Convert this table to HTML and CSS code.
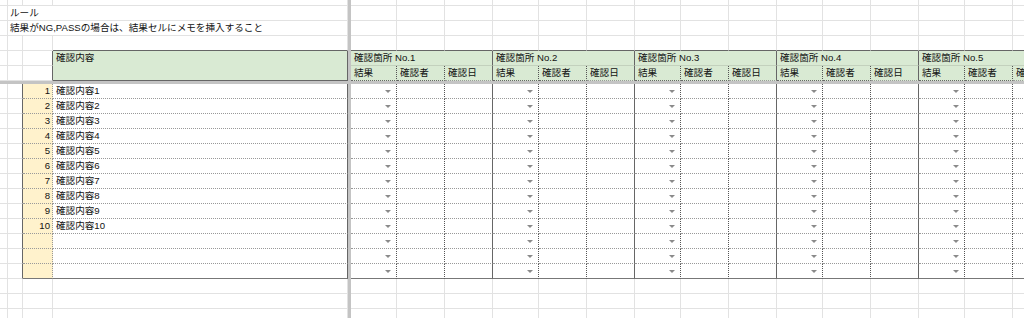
FILE: index.html
```html
<!DOCTYPE html>
<html lang="ja">
<head>
<meta charset="utf-8">
<title>確認シート</title>
<link rel="stylesheet" href="styles.css">
</head>
<body>
<div class="sheet">
<!-- r0 -->
<div class="c"></div><div class="c"></div><div class="c"></div><div class="c"></div><div class="bar"></div>
<div class="c"></div><div class="c"></div><div class="c"></div><div class="c"></div><div class="c"></div><div class="c"></div><div class="c"></div><div class="c"></div><div class="c"></div><div class="c"></div><div class="c"></div><div class="c"></div><div class="c"></div><div class="c"></div><div class="c"></div>
<!-- r1 -->
<div class="c"></div><div class="c t">ルール</div><div class="bar"></div>
<div class="c"></div><div class="c"></div><div class="c"></div><div class="c"></div><div class="c"></div><div class="c"></div><div class="c"></div><div class="c"></div><div class="c"></div><div class="c"></div><div class="c"></div><div class="c"></div><div class="c"></div><div class="c"></div><div class="c"></div>
<!-- r2 -->
<div class="c"></div><div class="c t">結果がNG,PASSの場合は、結果セルにメモを挿入すること</div><div class="bar"></div>
<div class="c"></div><div class="c"></div><div class="c"></div><div class="c"></div><div class="c"></div><div class="c"></div><div class="c"></div><div class="c"></div><div class="c"></div><div class="c"></div><div class="c"></div><div class="c"></div><div class="c"></div><div class="c"></div><div class="c"></div>
<!-- r3 -->
<div class="c"></div><div class="c"></div><div class="c"></div><div class="c bt"></div><div class="bar"></div>
<div class="c bt"></div><div class="c bt"></div><div class="c bt"></div><div class="c bt"></div><div class="c bt"></div><div class="c bt"></div><div class="c bt"></div><div class="c bt"></div><div class="c bt"></div><div class="c bt"></div><div class="c bt"></div><div class="c bt"></div><div class="c bt"></div><div class="c bt"></div><div class="c bt"></div>
<!-- r4 -->
<div class="c"></div><div class="c"></div><div class="c br"></div><div class="c hc">確認内容</div><div class="bar"></div>
<div class="c gh">確認箇所 No.1</div><div class="c gh">確認箇所 No.2</div><div class="c gh">確認箇所 No.3</div><div class="c gh">確認箇所 No.4</div><div class="c gh">確認箇所 No.5</div>
<!-- r5 -->
<div class="c"></div><div class="c"></div><div class="c br"></div><div class="bar"></div>
<div class="c sh">結果</div><div class="c sh">確認者</div><div class="c sh e">確認日</div>
<div class="c sh">結果</div><div class="c sh">確認者</div><div class="c sh e">確認日</div>
<div class="c sh">結果</div><div class="c sh">確認者</div><div class="c sh e">確認日</div>
<div class="c sh">結果</div><div class="c sh">確認者</div><div class="c sh e">確認日</div>
<div class="c sh">結果</div><div class="c sh">確認者</div><div class="c sh e">確認日</div>
<!-- frozen row bar -->
<div class="bar"></div><div class="bar"></div><div class="bar"></div><div class="bar"></div><div class="bar"></div>
<div class="bar"></div><div class="bar"></div><div class="bar"></div><div class="bar"></div><div class="bar"></div><div class="bar"></div><div class="bar"></div><div class="bar"></div><div class="bar"></div><div class="bar"></div><div class="bar"></div><div class="bar"></div><div class="bar"></div><div class="bar"></div><div class="bar"></div>
<!-- d1 -->
<div class="c"></div><div class="c br"></div><div class="c n">1</div><div class="c d">確認内容1</div><div class="bar"></div>
<div class="c r"></div><div class="c p"></div><div class="c e"></div><div class="c r"></div><div class="c p"></div><div class="c e"></div><div class="c r"></div><div class="c p"></div><div class="c e"></div><div class="c r"></div><div class="c p"></div><div class="c e"></div><div class="c r"></div><div class="c p"></div><div class="c e"></div>
<!-- d2 -->
<div class="c"></div><div class="c br"></div><div class="c n">2</div><div class="c d">確認内容2</div><div class="bar"></div>
<div class="c r"></div><div class="c p"></div><div class="c e"></div><div class="c r"></div><div class="c p"></div><div class="c e"></div><div class="c r"></div><div class="c p"></div><div class="c e"></div><div class="c r"></div><div class="c p"></div><div class="c e"></div><div class="c r"></div><div class="c p"></div><div class="c e"></div>
<!-- d3 -->
<div class="c"></div><div class="c br"></div><div class="c n">3</div><div class="c d">確認内容3</div><div class="bar"></div>
<div class="c r"></div><div class="c p"></div><div class="c e"></div><div class="c r"></div><div class="c p"></div><div class="c e"></div><div class="c r"></div><div class="c p"></div><div class="c e"></div><div class="c r"></div><div class="c p"></div><div class="c e"></div><div class="c r"></div><div class="c p"></div><div class="c e"></div>
<!-- d4 -->
<div class="c"></div><div class="c br"></div><div class="c n">4</div><div class="c d">確認内容4</div><div class="bar"></div>
<div class="c r"></div><div class="c p"></div><div class="c e"></div><div class="c r"></div><div class="c p"></div><div class="c e"></div><div class="c r"></div><div class="c p"></div><div class="c e"></div><div class="c r"></div><div class="c p"></div><div class="c e"></div><div class="c r"></div><div class="c p"></div><div class="c e"></div>
<!-- d5 -->
<div class="c"></div><div class="c br"></div><div class="c n">5</div><div class="c d">確認内容5</div><div class="bar"></div>
<div class="c r"></div><div class="c p"></div><div class="c e"></div><div class="c r"></div><div class="c p"></div><div class="c e"></div><div class="c r"></div><div class="c p"></div><div class="c e"></div><div class="c r"></div><div class="c p"></div><div class="c e"></div><div class="c r"></div><div class="c p"></div><div class="c e"></div>
<!-- d6 -->
<div class="c"></div><div class="c br"></div><div class="c n">6</div><div class="c d">確認内容6</div><div class="bar"></div>
<div class="c r"></div><div class="c p"></div><div class="c e"></div><div class="c r"></div><div class="c p"></div><div class="c e"></div><div class="c r"></div><div class="c p"></div><div class="c e"></div><div class="c r"></div><div class="c p"></div><div class="c e"></div><div class="c r"></div><div class="c p"></div><div class="c e"></div>
<!-- d7 -->
<div class="c"></div><div class="c br"></div><div class="c n">7</div><div class="c d">確認内容7</div><div class="bar"></div>
<div class="c r"></div><div class="c p"></div><div class="c e"></div><div class="c r"></div><div class="c p"></div><div class="c e"></div><div class="c r"></div><div class="c p"></div><div class="c e"></div><div class="c r"></div><div class="c p"></div><div class="c e"></div><div class="c r"></div><div class="c p"></div><div class="c e"></div>
<!-- d8 -->
<div class="c"></div><div class="c br"></div><div class="c n">8</div><div class="c d">確認内容8</div><div class="bar"></div>
<div class="c r"></div><div class="c p"></div><div class="c e"></div><div class="c r"></div><div class="c p"></div><div class="c e"></div><div class="c r"></div><div class="c p"></div><div class="c e"></div><div class="c r"></div><div class="c p"></div><div class="c e"></div><div class="c r"></div><div class="c p"></div><div class="c e"></div>
<!-- d9 -->
<div class="c"></div><div class="c br"></div><div class="c n">9</div><div class="c d">確認内容9</div><div class="bar"></div>
<div class="c r"></div><div class="c p"></div><div class="c e"></div><div class="c r"></div><div class="c p"></div><div class="c e"></div><div class="c r"></div><div class="c p"></div><div class="c e"></div><div class="c r"></div><div class="c p"></div><div class="c e"></div><div class="c r"></div><div class="c p"></div><div class="c e"></div>
<!-- d10 -->
<div class="c"></div><div class="c br"></div><div class="c n">10</div><div class="c d">確認内容10</div><div class="bar"></div>
<div class="c r"></div><div class="c p"></div><div class="c e"></div><div class="c r"></div><div class="c p"></div><div class="c e"></div><div class="c r"></div><div class="c p"></div><div class="c e"></div><div class="c r"></div><div class="c p"></div><div class="c e"></div><div class="c r"></div><div class="c p"></div><div class="c e"></div>
<!-- d11 -->
<div class="c"></div><div class="c br"></div><div class="c n"></div><div class="c d"></div><div class="bar"></div>
<div class="c r"></div><div class="c p"></div><div class="c e"></div><div class="c r"></div><div class="c p"></div><div class="c e"></div><div class="c r"></div><div class="c p"></div><div class="c e"></div><div class="c r"></div><div class="c p"></div><div class="c e"></div><div class="c r"></div><div class="c p"></div><div class="c e"></div>
<!-- d12 -->
<div class="c"></div><div class="c br"></div><div class="c n"></div><div class="c d"></div><div class="bar"></div>
<div class="c r"></div><div class="c p"></div><div class="c e"></div><div class="c r"></div><div class="c p"></div><div class="c e"></div><div class="c r"></div><div class="c p"></div><div class="c e"></div><div class="c r"></div><div class="c p"></div><div class="c e"></div><div class="c r"></div><div class="c p"></div><div class="c e"></div>
<!-- d13 -->
<div class="c"></div><div class="c br"></div><div class="c n l"></div><div class="c d l"></div><div class="bar"></div>
<div class="c r l"></div><div class="c p l"></div><div class="c e l"></div><div class="c r l"></div><div class="c p l"></div><div class="c e l"></div><div class="c r l"></div><div class="c p l"></div><div class="c e l"></div><div class="c r l"></div><div class="c p l"></div><div class="c e l"></div><div class="c r l"></div><div class="c p l"></div><div class="c e l"></div>
<!-- b1 -->
<div class="c"></div><div class="c"></div><div class="c"></div><div class="c"></div><div class="bar"></div>
<div class="c"></div><div class="c"></div><div class="c"></div><div class="c"></div><div class="c"></div><div class="c"></div><div class="c"></div><div class="c"></div><div class="c"></div><div class="c"></div><div class="c"></div><div class="c"></div><div class="c"></div><div class="c"></div><div class="c"></div>
<!-- b2 -->
<div class="c"></div><div class="c"></div><div class="c"></div><div class="c"></div><div class="bar"></div>
<div class="c"></div><div class="c"></div><div class="c"></div><div class="c"></div><div class="c"></div><div class="c"></div><div class="c"></div><div class="c"></div><div class="c"></div><div class="c"></div><div class="c"></div><div class="c"></div><div class="c"></div><div class="c"></div><div class="c"></div>
<!-- b3 -->
<div class="c"></div><div class="c"></div><div class="c"></div><div class="c"></div><div class="bar"></div>
<div class="c"></div><div class="c"></div><div class="c"></div><div class="c"></div><div class="c"></div><div class="c"></div><div class="c"></div><div class="c"></div><div class="c"></div><div class="c"></div><div class="c"></div><div class="c"></div><div class="c"></div><div class="c"></div><div class="c"></div>
</div>
</body>
</html>
```
FILE: styles.css
```css
html, body {
  margin: 0;
  padding: 0;
  background: #fff;
  overflow: hidden;
}

.sheet {
  display: grid;
  grid-template-columns: 8px 15px 30px 295px 3px repeat(5, 46px 48px 48px);
  grid-template-rows: 6px repeat(5, 15px) 3px repeat(16, 15px);
  width: 1061px;
  font-family: "Liberation Sans", "Noto Sans CJK JP", Arial, sans-serif;
  font-size: 9.6px;
  line-height: 14px;
  color: #111;
}

.c {
  box-sizing: border-box;
  border-right: 1px solid #e2e2e2;
  border-bottom: 1px solid #e2e2e2;
  white-space: nowrap;
  overflow: hidden;
  display: flex;
  align-items: center;
  min-width: 0;
}

.bar {
  background: #c4c4c4;
}

.t {
  grid-column: span 3;
  padding-left: 2px;
}

.bt {
  border-bottom-color: #666;
}

.br {
  border-right-color: #666;
}

.hc {
  grid-row: span 2;
  background: #d9ead3;
  border-right-color: #666;
  border-bottom-color: #666;
  align-items: flex-start;
  padding-left: 3px;
}

.gh {
  grid-column: span 3;
  background: #d9ead3;
  border-right-color: #666;
  border-bottom-color: #c3d1bd;
  padding-left: 3px;
}

.sh {
  background: #d9ead3;
  border-right: 1px dotted #555;
  border-bottom: 1px dotted #666;
  padding-left: 3px;
}

.sh.e {
  border-right: 1px solid #666;
}

.n {
  background: #fff2cc;
  justify-content: flex-end;
  padding-right: 2px;
  border-right: 1px dotted #999;
  border-bottom: 1px dotted #999;
}

.d {
  padding-left: 3px;
  border-right-color: #666;
  border-bottom: 1px dotted #999;
}

.r {
  justify-content: flex-end;
  padding-right: 5px;
  border-right: 1px dotted #555;
  border-bottom: 1px dotted #999;
}

.r::after {
  content: "";
  width: 0;
  height: 0;
  border-left: 3px solid transparent;
  border-right: 3px solid transparent;
  border-top: 3px solid #8a8a8a;
}

.p {
  border-right: 1px dotted #555;
  border-bottom: 1px dotted #999;
}

.e {
  border-right-color: #666;
  border-bottom: 1px dotted #999;
}

.sheet .l {
  border-bottom: 1px solid #777;
}
```
